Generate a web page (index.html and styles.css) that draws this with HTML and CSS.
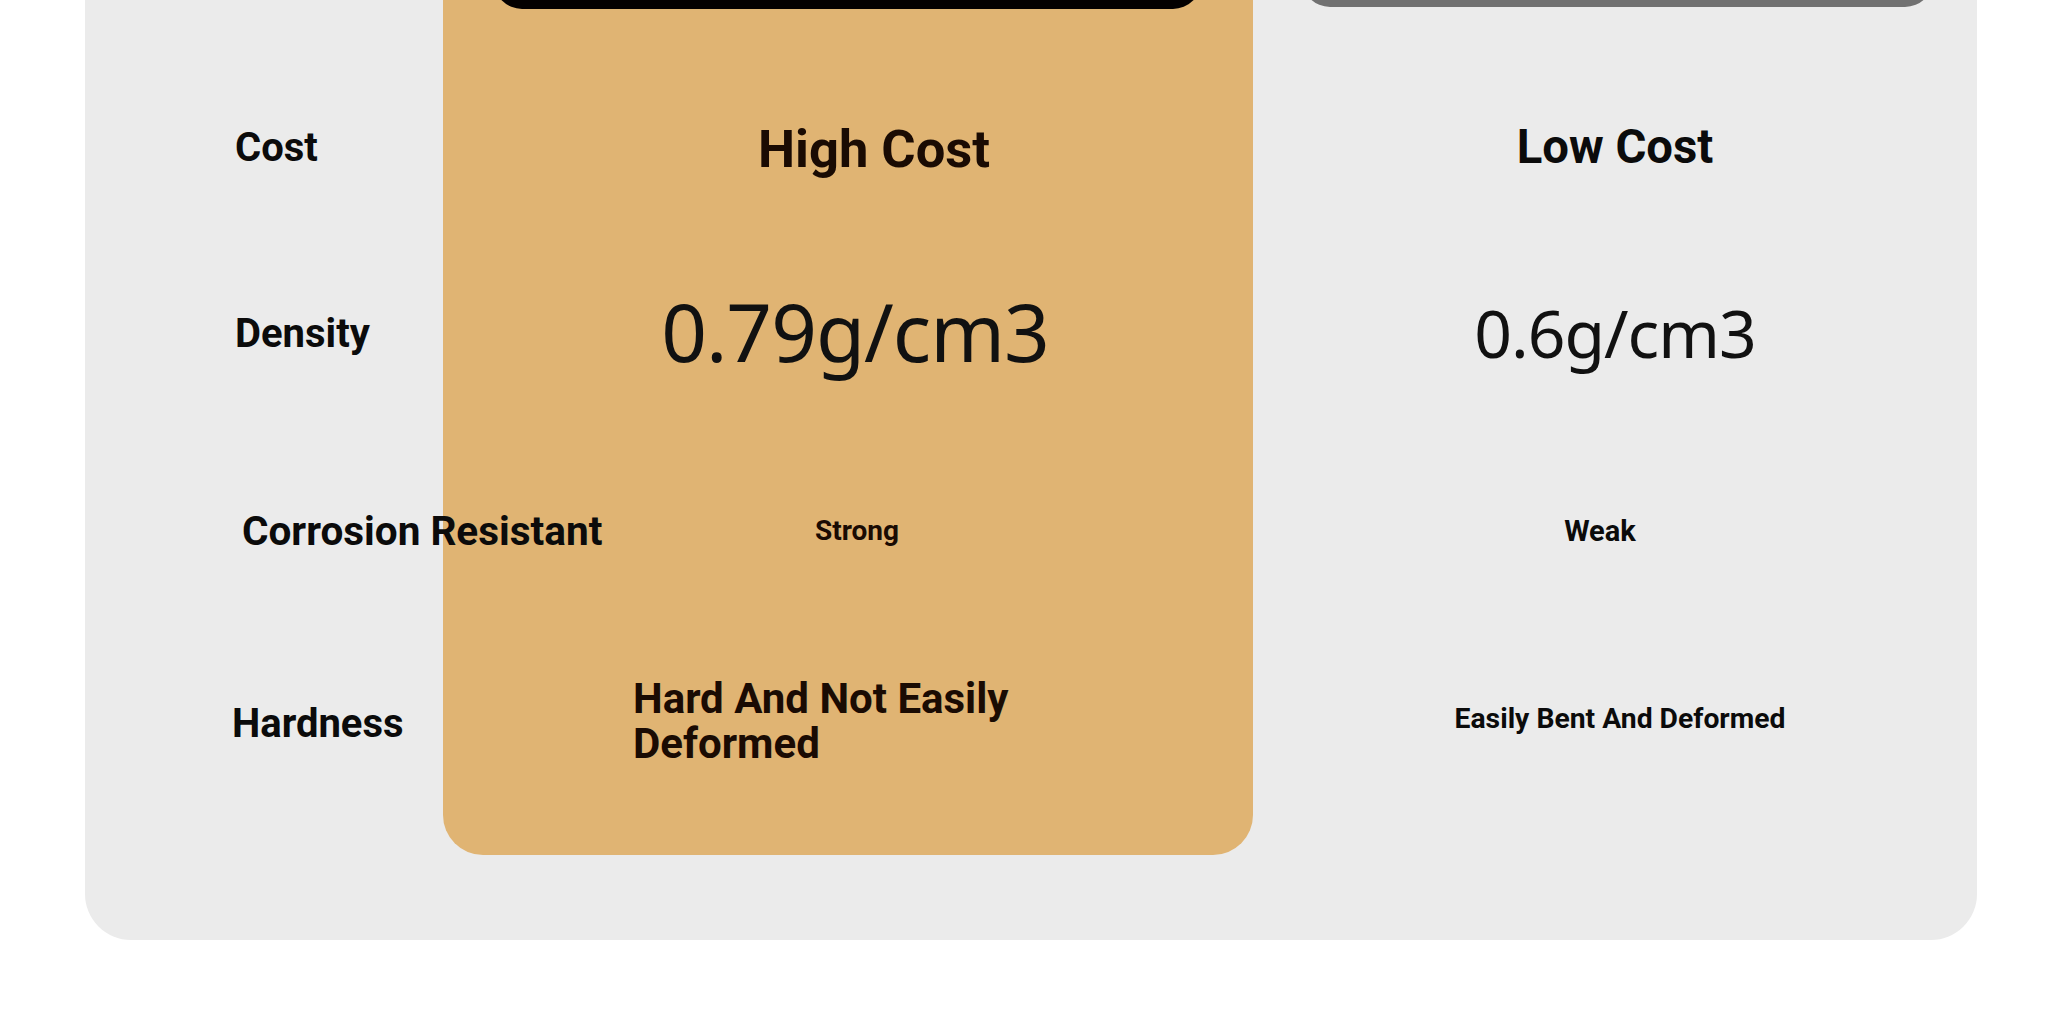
FILE: index.html
```html
<!DOCTYPE html>
<html lang="en">
<head>
<meta charset="utf-8">
<title>Comparison</title>
<link rel="stylesheet" href="styles.css">
</head>
<body>
<div class="panel">
  <div class="col col-labels">
    <div class="head"></div>
    <div class="row row-cost"><span class="label">Cost</span></div>
    <div class="row row-density"><span class="label">Density</span></div>
    <div class="row row-corr"><span class="label label-corr">Corrosion Resistant</span></div>
    <div class="row row-hard"><span class="label label-hard">Hardness</span></div>
  </div>
  <div class="col col-high">
    <div class="head"><div class="bar bar-black"></div></div>
    <div class="row row-cost"><span class="big high-cost">High Cost</span></div>
    <div class="row row-density"><span class="num num-high">0.79g/cm3</span></div>
    <div class="row row-corr"><span class="small strong">Strong</span></div>
    <div class="row row-hard row-left"><span class="hard-text">Hard And Not Easily Deformed</span></div>
  </div>
  <div class="col col-low">
    <div class="head"><div class="bar bar-gray"></div></div>
    <div class="row row-cost"><span class="big low-cost">Low Cost</span></div>
    <div class="row row-density"><span class="num num-low">0.6g/cm3</span></div>
    <div class="row row-corr"><span class="small weak">Weak</span></div>
    <div class="row row-hard"><span class="small easily">Easily Bent And Deformed</span></div>
  </div>
</div>
</body>
</html>
```

FILE: styles.css
```css
html, body {
  margin: 0;
  padding: 0;
  background: #ffffff;
  overflow: hidden;
}

body {
  font-family: Roboto, "Liberation Sans", sans-serif;
  color: #0b0b0b;
}

.panel {
  display: flex;
  align-items: flex-start;
  width: 1892px;
  margin: -60px 0 0 85px;
  padding-bottom: 85px;
  background: #ebebeb;
  border-radius: 0 0 46px 46px;
}

.col {
  display: flex;
  flex-direction: column;
}

.col-labels {
  width: 358px;
  position: relative;
  z-index: 1;
}

.col-high {
  width: 810px;
  background: #e0b473;
  border-radius: 0 0 40px 40px;
  padding-bottom: 50px;
  color: #1a0b03;
}

.col-low {
  flex: 1;
}

.head {
  height: 69px;
  margin-bottom: 44px;
  display: flex;
}

.bar {
  flex: 1;
  height: 69px;
  border-radius: 0 0 28px 28px;
}

.bar-black {
  background: #040000;
  margin: 0 52px 0 51px;
}

.bar-gray {
  background: #717171;
  margin: 0 44px 0 49px;
  height: 67px;
}

.row {
  display: flex;
  align-items: center;
  justify-content: center;
}

.row-cost { height: 190px; }
.row-density { height: 182px; }
.row-corr { height: 212px; }
.row-hard { height: 168px; }

.col-labels .row {
  justify-content: flex-start;
  padding-left: 150px;
}

.label {
  font-size: 40px;
  font-weight: 700;
  white-space: nowrap;
  line-height: 1.2;
}

.label-corr {
  font-size: 40.5px;
  margin-left: 7px;
}

.label-hard {
  margin-left: -3px;
  margin-top: 6px;
}

.big {
  font-weight: 700;
  line-height: 1.2;
}

.high-cost {
  font-size: 52.5px;
  margin-left: 52px;
  margin-top: 2px;
}

.low-cost {
  font-size: 47.3px;
  margin-top: -2px;
}

.num {
  font-family: "Noto Sans", "Open Sans", sans-serif;
  font-weight: 400;
  line-height: 1.2;
  color: #111111;
}

.num-high {
  font-size: 80px;
  margin-left: 14px;
  margin-top: -6px;
  letter-spacing: -1px;
}

.num-low {
  font-size: 66px;
  letter-spacing: -1px;
  margin-top: -2px;
}

.small {
  font-weight: 700;
  line-height: 1.2;
}

.strong {
  font-size: 28px;
  margin-left: 18px;
}

.weak {
  font-size: 29px;
  margin-right: 30px;
}

.easily {
  font-size: 28.3px;
  margin-left: 10px;
  margin-top: -4px;
}

.row-left {
  justify-content: flex-start;
  padding-left: 190px;
}

.hard-text {
  width: 430px;
  font-size: 42px;
  font-weight: 700;
  line-height: 45px;
}
```
